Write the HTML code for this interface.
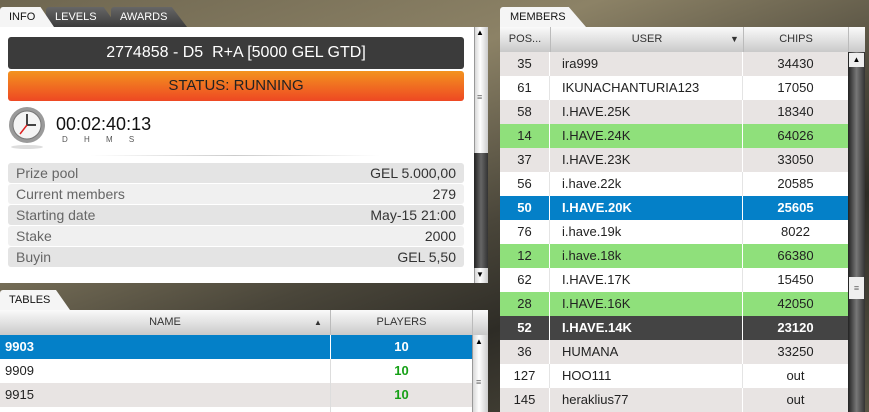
<!DOCTYPE html><html style="overflow:hidden;height:412px"><head><style>
*{margin:0;padding:0;box-sizing:border-box}
body{width:869px;height:412px;overflow:hidden;position:relative;font-family:"Liberation Sans",Arial,sans-serif;background:linear-gradient(160deg,#6e6650 0%,#8c8266 30%,#4a463a 55%,#2e2c26 70%,#585444 100%)}
.abs{position:absolute}
.tab{position:absolute;height:20px;font-size:11px;line-height:20px;padding-left:9px;color:#fff;background:linear-gradient(#666,#3c3c3c);clip-path:polygon(0 0,80% 0,100% 100%,0 100%);border-radius:3px 0 0 0}
.tab.on{background:#f5f5f5;color:#111}
.hdr{background:linear-gradient(#fafafa,#c9c9c9);font-size:11px;color:#333;text-align:center;line-height:25px;height:25px}
.sb{background:linear-gradient(90deg,#d8d8d8,#fff 40%,#ccc)}
.info{position:absolute;left:8px;width:456px;height:20px;font-size:14px;line-height:20px;color:#666;padding:0 8px;border-radius:3px}
.info span{float:right;color:#333}
.r{position:absolute;left:500px;width:348px;height:24px;font-size:13px;line-height:24px;color:#222}
.r div{position:absolute;top:0;height:24px}
.c1{left:0;width:50px;text-align:center;border-right:1px solid #fff}
.c2{left:50px;width:193px;padding-left:12px;border-right:1px solid #fff}
.c3{left:243px;width:105px;text-align:center}
.w{background:#fff}.w div{border-color:#e4e4e4}
.g{background:#e8e4e3}
.gr{background:#8fe07b}
.t{position:absolute;left:0;width:472px;height:24px;font-size:13px;line-height:24px;color:#222}
.t .n{position:absolute;left:5px}
.t .p{position:absolute;left:330px;width:142px;text-align:center;color:#16a016;font-weight:bold;border-left:1px solid #ddd;height:24px}
.b{background:#0480c8;color:#fff !important;font-weight:bold}
.d{background:#444;color:#fff;font-weight:bold}
</style></head><body>
<div class="tab" style="left:46px;top:7px;width:72px">LEVELS</div>
<div class="tab" style="left:111px;top:7px;width:76px">AWARDS</div>
<div class="tab on" style="left:0;top:7px;width:54px;clip-path:polygon(0 0,75% 0,100% 100%,0 100%)">INFO</div>
<div class="abs" style="left:0;top:27px;width:474px;height:256px;background:#fff"></div>
<div class="abs sb" style="left:474px;top:27px;width:14px;height:256px;border-left:1px solid #999"></div>
<div class="abs" style="left:474px;top:153px;width:14px;height:115px;background:linear-gradient(90deg,#222,#666,#333)"></div>
<div class="abs" style="left:476px;top:28px;font-size:8px">▲</div>
<div class="abs" style="left:476px;top:270px;font-size:8px">▼</div>
<div class="abs" style="left:477px;top:92px;font-size:9px;color:#666">≡</div>
<div class="abs" style="left:8px;top:37px;width:456px;height:32px;background:#3b3b3b;border-radius:3px;color:#fff;font-size:16px;text-align:center;line-height:32px">2774858 - D5&nbsp; R+A [5000 GEL GTD]</div>
<div class="abs" style="left:8px;top:71px;width:456px;height:30px;background:linear-gradient(#f3931f,#ee4823);border-radius:3px;color:#222;font-size:15px;text-align:center;line-height:30px">STATUS: RUNNING</div>
<svg class="abs" style="left:8px;top:106px" width="40" height="44"><circle cx="19" cy="19" r="18" fill="#9a9a9a"/><circle cx="19" cy="19" r="14" fill="#f4f4f4" stroke="#777"/><line x1="19" y1="19" x2="19" y2="8" stroke="#444" stroke-width="2"/><line x1="19" y1="19" x2="28" y2="19" stroke="#444" stroke-width="2"/><line x1="19" y1="19" x2="12" y2="28" stroke="#d22" stroke-width="1.5"/><ellipse cx="19" cy="41" rx="16" ry="2" fill="#ddd"/></svg>
<div class="abs" style="left:56px;top:114px;font-size:18px;color:#111">00:02:40:13</div>
<div class="abs" style="left:62px;top:135px;font-size:8px;color:#555;word-spacing:14px">D H M S</div>
<div class="abs" style="left:90px;top:155px;width:290px;height:1px;background:linear-gradient(90deg,#fff,#ccc,#fff)"></div>
<div class="info" style="top:163px;background:#e4e4e4">Prize pool<span>GEL 5.000,00</span></div>
<div class="info" style="top:184px;background:#f0f0f0">Current members<span>279</span></div>
<div class="info" style="top:205px;background:#e4e4e4">Starting date<span>May-15 21:00</span></div>
<div class="info" style="top:226px;background:#f0f0f0">Stake<span>2000</span></div>
<div class="info" style="top:247px;background:#e4e4e4">Buyin<span>GEL 5,50</span></div>

<div class="tab on" style="left:0;top:290px;width:70px">TABLES</div>
<div class="abs hdr" style="left:0;top:310px;width:488px"><span class="abs" style="left:0;width:330px">NAME</span><span class="abs" style="left:314px;font-size:8px">▲</span><span class="abs" style="left:330px;width:142px;border-left:1px solid #bbb">PLAYERS</span><span class="abs" style="left:472px;width:16px;height:25px;border-left:1px solid #bbb"></span></div>
<div class="t b" style="top:335px"><span class="n">9903</span><span class="p" style="color:#fff;border-color:#fff">10</span></div>
<div class="t" style="top:359px;background:#fff"><span class="n">9909</span><span class="p">10</span></div>
<div class="t" style="top:383px;background:#e8e4e3"><span class="n">9915</span><span class="p">10</span></div>
<div class="t" style="top:407px;height:5px;background:#fff;overflow:hidden"><span class="p"></span></div>
<div class="abs sb" style="left:472px;top:335px;width:16px;height:77px;border-left:1px solid #999"></div>
<div class="abs" style="left:475px;top:337px;font-size:8px">▲</div>
<div class="abs" style="left:476px;top:377px;font-size:9px;color:#666">≡</div>

<div class="tab on" style="left:500px;top:7px;width:86px;padding-left:10px">MEMBERS</div>
<div class="abs hdr" style="left:500px;top:27px;width:365px"><span class="abs" style="left:0;width:50px">POS...</span><span class="abs" style="left:50px;width:193px;border-left:1px solid #bbb">USER</span><span class="abs" style="left:230px;font-size:9px">▼</span><span class="abs" style="left:243px;width:105px;border-left:1px solid #bbb">CHIPS</span><span class="abs" style="left:348px;width:17px;height:25px;border-left:1px solid #bbb"></span></div>
<div class="r g" style="top:52px"><div class="c1">35</div><div class="c2">ira999</div><div class="c3">34430</div></div>
<div class="r w" style="top:76px"><div class="c1">61</div><div class="c2">IKUNACHANTURIA123</div><div class="c3">17050</div></div>
<div class="r g" style="top:100px"><div class="c1">58</div><div class="c2">I.HAVE.25K</div><div class="c3">18340</div></div>
<div class="r gr" style="top:124px"><div class="c1">14</div><div class="c2">I.HAVE.24K</div><div class="c3">64026</div></div>
<div class="r g" style="top:148px"><div class="c1">37</div><div class="c2">I.HAVE.23K</div><div class="c3">33050</div></div>
<div class="r w" style="top:172px"><div class="c1">56</div><div class="c2">i.have.22k</div><div class="c3">20585</div></div>
<div class="r b" style="top:196px"><div class="c1">50</div><div class="c2">I.HAVE.20K</div><div class="c3">25605</div></div>
<div class="r w" style="top:220px"><div class="c1">76</div><div class="c2">i.have.19k</div><div class="c3">8022</div></div>
<div class="r gr" style="top:244px"><div class="c1">12</div><div class="c2">i.have.18k</div><div class="c3">66380</div></div>
<div class="r w" style="top:268px"><div class="c1">62</div><div class="c2">I.HAVE.17K</div><div class="c3">15450</div></div>
<div class="r gr" style="top:292px"><div class="c1">28</div><div class="c2">I.HAVE.16K</div><div class="c3">42050</div></div>
<div class="r d" style="top:316px"><div class="c1">52</div><div class="c2">I.HAVE.14K</div><div class="c3">23120</div></div>
<div class="r g" style="top:340px"><div class="c1">36</div><div class="c2">HUMANA</div><div class="c3">33250</div></div>
<div class="r w" style="top:364px"><div class="c1">127</div><div class="c2">HOO111</div><div class="c3">out</div></div>
<div class="r g" style="top:388px"><div class="c1">145</div><div class="c2">heraklius77</div><div class="c3">out</div></div>
<div class="abs" style="left:848px;top:52px;width:17px;height:360px;background:linear-gradient(90deg,#222,#777,#333)"></div>
<div class="abs" style="left:849px;top:53px;width:15px;height:14px;background:#eee;font-size:8px;text-align:center;line-height:14px">▲</div>
<div class="abs" style="left:849px;top:277px;width:15px;height:22px;background:#eee;font-size:9px;text-align:center;line-height:22px;color:#666">≡</div>
</body></html>
